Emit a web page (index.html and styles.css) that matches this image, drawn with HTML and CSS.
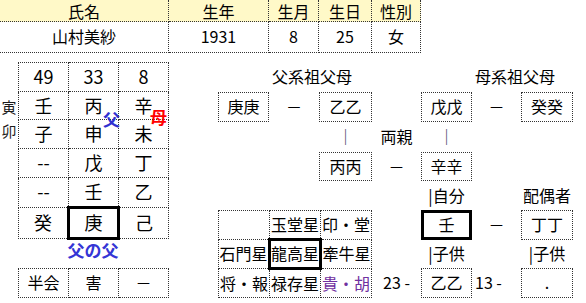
FILE: index.html
```html
<!DOCTYPE html>
<html lang="ja">
<head>
<meta charset="utf-8">
<title>命式</title>
<link rel="stylesheet" href="styles.css">
</head>
<body>
<div class="sheet">
  <table class="profile">
    <colgroup>
      <col class="col-name"><col class="col-year"><col class="col-month"><col class="col-day"><col class="col-sex">
    </colgroup>
    <tr><th>氏名</th><th>生年</th><th>生月</th><th>生日</th><th>性別</th></tr>
    <tr><td>山村美紗</td><td>1931</td><td>8</td><td>25</td><td>女</td></tr>
  </table>

  <div class="branches"><span>寅</span><span>卯</span></div>

  <div class="pillars-wrap">
    <table class="pillars">
      <tr><td>49</td><td>33</td><td>8</td></tr>
      <tr><td>壬</td><td>丙</td><td>辛</td></tr>
      <tr><td>子</td><td>申</td><td>未</td></tr>
      <tr><td>--</td><td>戊</td><td>丁</td></tr>
      <tr><td>--</td><td>壬</td><td>乙</td></tr>
      <tr><td>癸</td><td class="self">庚</td><td>己</td></tr>
    </table>
    <span class="tag tag-father">父</span>
    <span class="tag tag-mother">母</span>
  </div>

  <div class="father-of-father">父の父</div>

  <table class="relations">
    <tr><td>半会</td><td>害</td><td>－</td></tr>
  </table>

  <div class="family">
    <span class="cell"></span>
    <span class="cell lineage">父系祖父母</span>
    <span class="cell"></span>
    <span class="cell"></span>
    <span class="cell"></span>
    <span class="cell lineage">母系祖父母</span>
    <span class="cell"></span>

    <span class="cell box">庚庚</span>
    <span class="cell">－</span>
    <span class="cell box">乙乙</span>
    <span class="cell"></span>
    <span class="cell box">戊戊</span>
    <span class="cell">－</span>
    <span class="cell box">癸癸</span>

    <span class="cell"></span>
    <span class="cell"></span>
    <span class="cell link">｜</span>
    <span class="cell">両親</span>
    <span class="cell link">｜</span>
    <span class="cell"></span>
    <span class="cell"></span>

    <span class="cell"></span>
    <span class="cell"></span>
    <span class="cell box">丙丙</span>
    <span class="cell">－</span>
    <span class="cell box">辛辛</span>
    <span class="cell"></span>
    <span class="cell"></span>

    <span class="cell"></span>
    <span class="cell"></span>
    <span class="cell"></span>
    <span class="cell"></span>
    <span class="cell">|自分</span>
    <span class="cell"></span>
    <span class="cell">配偶者</span>

    <div class="stars">
      <table>
        <tr><td></td><td>玉堂星</td><td>印・堂</td></tr>
        <tr><td>石門星</td><td class="self">龍高星</td><td>牽牛星</td></tr>
        <tr><td>将・報</td><td>禄存星</td><td class="noble">貴・胡</td></tr>
      </table>
    </div>
    <span class="cell"></span>
    <span class="cell box self">壬</span>
    <span class="cell">－</span>
    <span class="cell box">丁丁</span>

    <span class="cell"></span>
    <span class="cell">|子供</span>
    <span class="cell"></span>
    <span class="cell">|子供</span>

    <span class="cell">23 -</span>
    <span class="cell box">乙乙</span>
    <span class="cell lead">13 -</span>
    <span class="cell box">.</span>
  </div>
</div>
</body>
</html>
```

FILE: styles.css
```css
* {
  box-sizing: border-box;
}

body {
  margin: 0;
  background: #ffffff;
  color: #000000;
  font-family: "Noto Sans CJK JP", sans-serif;
  font-size: 16px;
}

.sheet {
  display: grid;
  grid-template-columns: 18px 50px 50px 51px 49px 51px 50px 53px 49px 51px 49px 52px;
  grid-template-rows: 22px 31px 9px 30px 30px 30px 29px 29px 30px 28px 30px;
}

table {
  border-collapse: collapse;
  table-layout: fixed;
  width: 100%;
  height: 100%;
}

td,
th {
  padding: 0;
  text-align: center;
  vertical-align: middle;
  font-weight: normal;
  line-height: 1.2;
  white-space: nowrap;
}

/* profile header */
.profile {
  grid-column: 1 / 10;
  grid-row: 1 / 3;
  border-collapse: separate;
  border-spacing: 0;
}

.col-name { width: 169px; }
.col-year { width: 100px; }
.col-month { width: 50px; }
.col-day { width: 53px; }
.col-sex { width: 49px; }

.profile th,
.profile td {
  border-right: 1px dotted #333;
  border-bottom: 1px dotted #333;
}

.profile th {
  background: #fff9c8;
  height: 22px;
  padding-top: 1px;
  line-height: 20px;
}

.profile td {
  height: 31px;
}

/* branch labels */
.branches {
  grid-column: 1;
  grid-row: 5 / 7;
  display: flex;
  flex-direction: column;
  align-items: center;
  justify-content: center;
  padding-bottom: 6px;
  font-size: 15px;
  line-height: 24px;
  color: #1a1a1a;
}

/* pillars */
.pillars-wrap {
  grid-column: 2 / 5;
  grid-row: 4 / 10;
  position: relative;
}

.pillars {
  font-size: 18px;
}

.pillars td {
  border: 1px dotted #333;
}

.pillars td.self,
.stars td.self {
  border: 3px solid #000;
}

.tag {
  position: absolute;
  font-size: 17px;
  font-weight: bold;
  line-height: 1;
}

.tag-father {
  left: 85px;
  top: 48px;
  color: #3030d0;
}

.tag-mother {
  left: 132px;
  top: 46px;
  color: #ff0000;
}

.father-of-father {
  grid-column: 3;
  grid-row: 10;
  display: flex;
  justify-content: center;
  line-height: 20px;
  font-size: 17px;
  font-weight: bold;
  color: #3535d5;
  white-space: nowrap;
}

.relations {
  grid-column: 2 / 5;
  grid-row: 11;
}

.relations td {
  border: 1px dotted #333;
}

/* family tree */
.family {
  grid-column: 6 / 13;
  grid-row: 4 / 12;
  display: grid;
  grid-template-columns: 51px 50px 53px 49px 51px 49px 52px;
  grid-template-rows: 30px 30px 30px 29px 29px 30px 28px 30px;
}

.cell {
  display: flex;
  align-items: center;
  justify-content: center;
  white-space: nowrap;
  line-height: 1.2;
}

.lineage,
.lead {
  justify-content: flex-start;
  padding-left: 3px;
}

.link {
  color: #335;
}

.box {
  border: 1px dotted #333;
}

.box.self {
  border: 3px solid #000;
}

.stars {
  grid-column: 1 / 4;
  grid-row: 6 / 9;
}

.stars td {
  border: 1px dotted #333;
}

.stars td.noble {
  color: #7030a0;
}
```
